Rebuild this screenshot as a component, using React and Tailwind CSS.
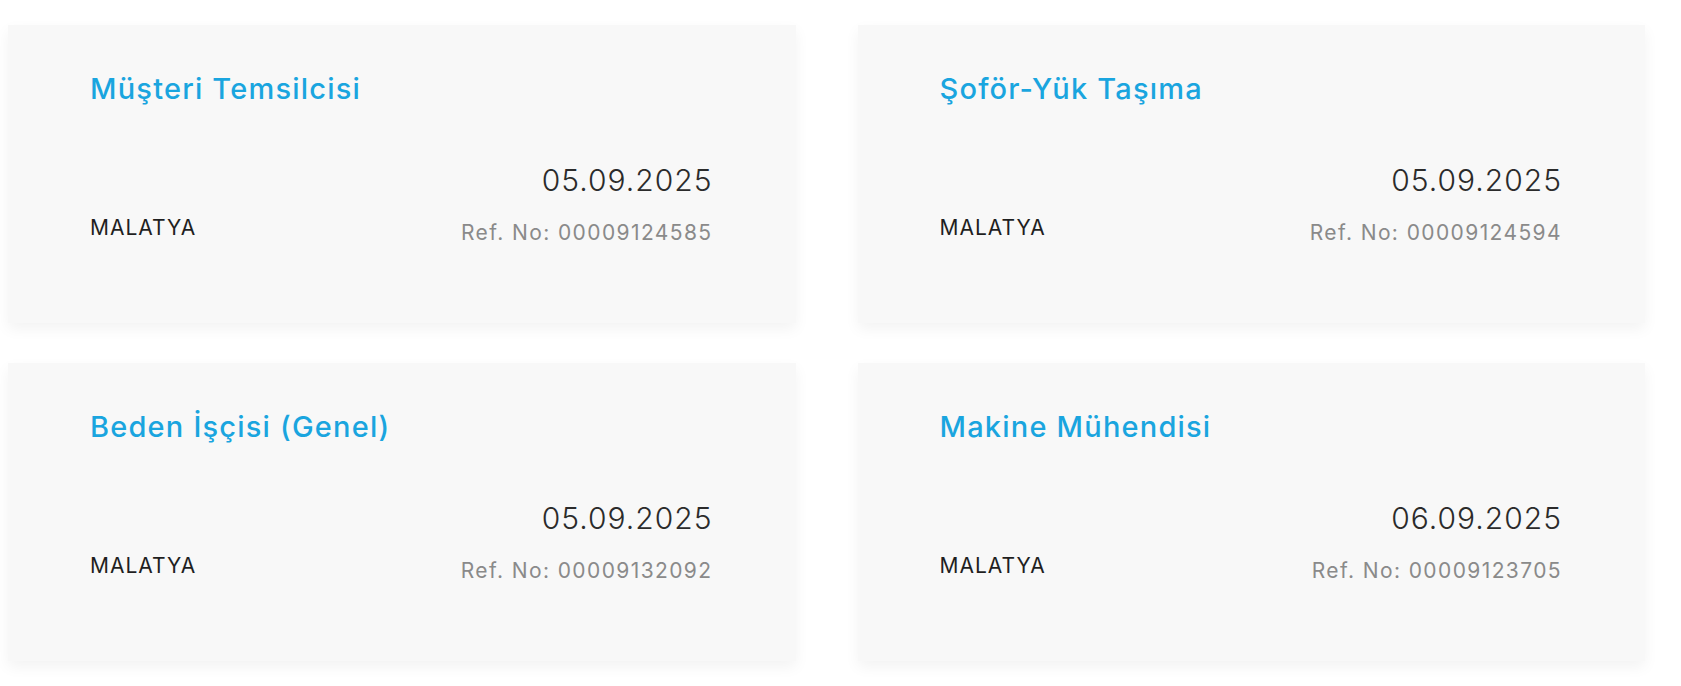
import React from 'react';

const jobs = [
  { title: 'Müşteri Temsilcisi', city: 'MALATYA', date: '05.09.2025', ref: '00009124585' },
  { title: 'Şoför-Yük Taşıma', city: 'MALATYA', date: '05.09.2025', ref: '00009124594' },
  { title: 'Beden İşçisi (Genel)', city: 'MALATYA', date: '05.09.2025', ref: '00009132092' },
  { title: 'Makine Mühendisi', city: 'MALATYA', date: '06.09.2025', ref: '00009123705' },
];

function JobCard({ job }) {
  return (
    <div className="flex h-[298px] flex-col bg-[#f8f8f8] pl-[82px] pr-[83px] pt-[44px] shadow-[0_6px_14px_rgba(0,0,0,0.05)]">
      <h3 className="text-[29px] font-medium leading-[40px] tracking-[1.2px] text-[#1aa5df]">{job.title}</h3>
      <div className="mt-[51px] flex items-end justify-between">
        <span className="mb-[5px] text-[21px] leading-[28px] tracking-[1px] text-[#1f1f1f]">{job.city}</span>
        <div className="flex flex-col items-end">
          <span className="text-[30px] font-light leading-[40px] tracking-[1px] text-[#2b2b2b]">{job.date}</span>
          <span className="mt-[19px] text-[21px] leading-[28px] tracking-[1.4px] text-[#8a8a8a]">Ref. No: {job.ref}</span>
        </div>
      </div>
    </div>
  );
}

export default function App() {
  return (
    <div className="min-h-screen bg-white font-['Inter',sans-serif]">
      <div className="grid grid-cols-2 gap-x-[62px] gap-y-[40px] pl-[8px] pr-[36px] pt-[25px]">
        {jobs.map((job) => (
          <JobCard key={job.ref} job={job} />
        ))}
      </div>
    </div>
  );
}
